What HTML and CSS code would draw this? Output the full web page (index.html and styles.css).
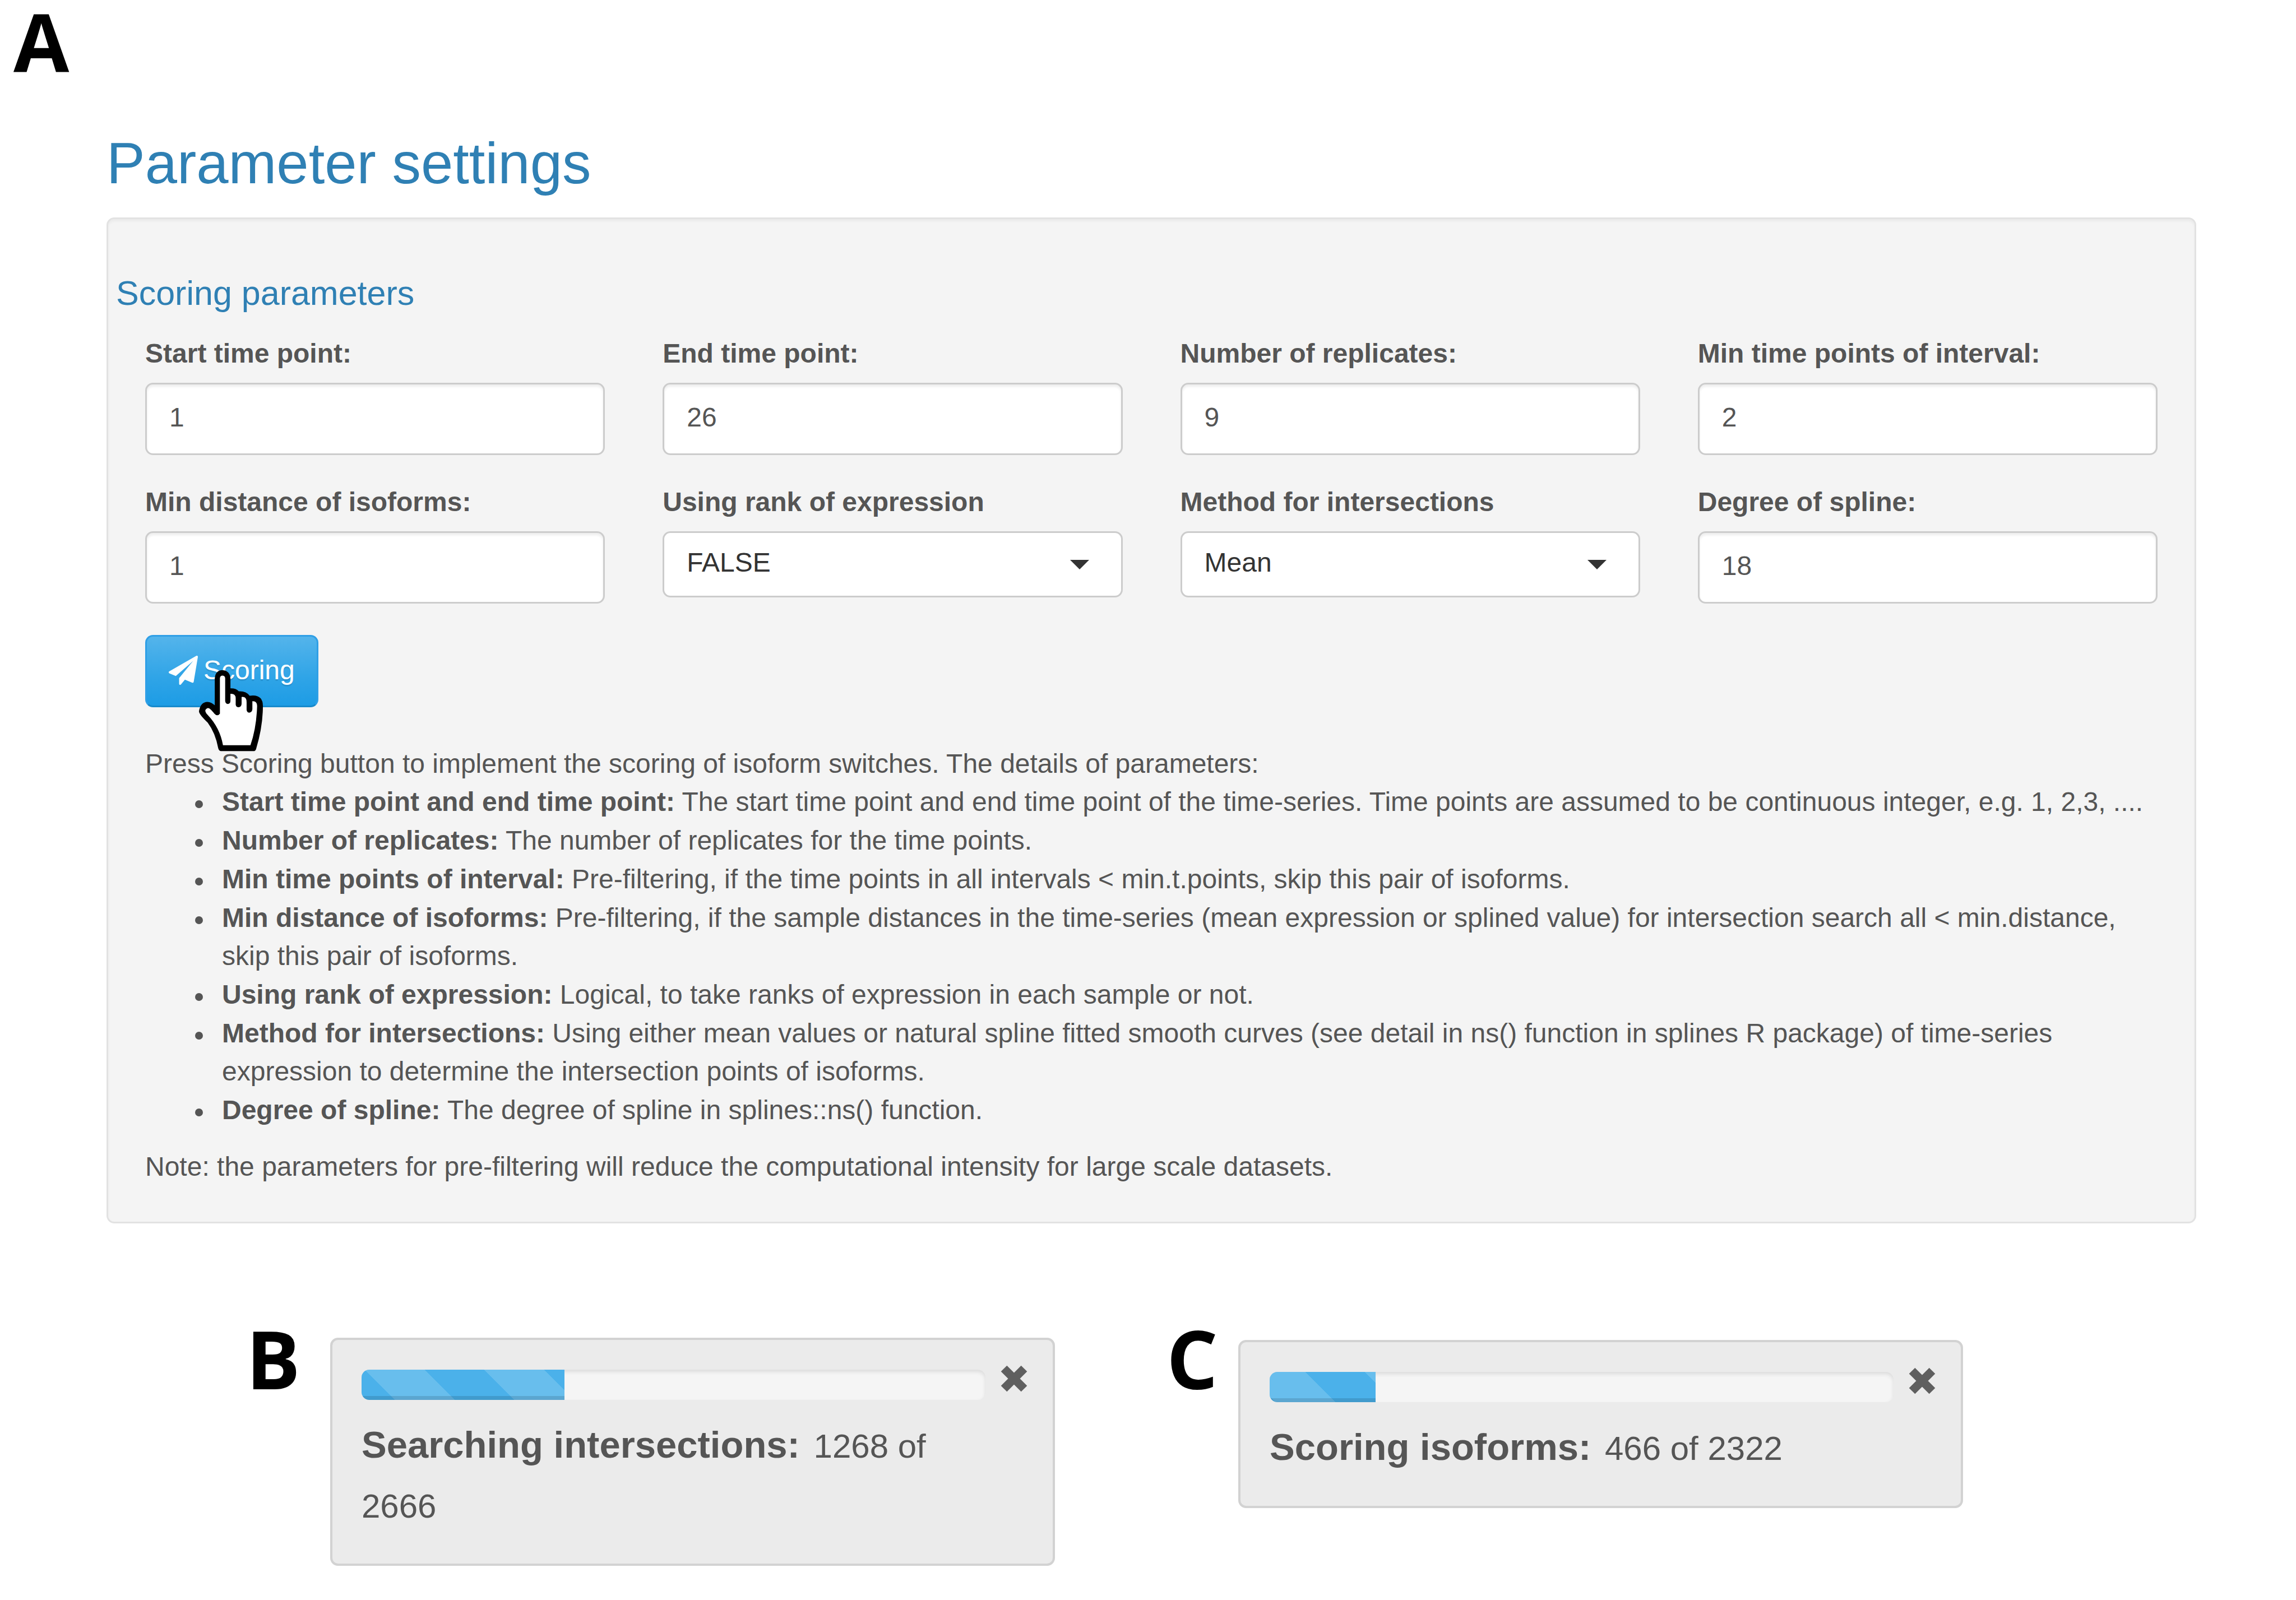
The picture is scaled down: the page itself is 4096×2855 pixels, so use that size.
FILE: index.html
```html
<!DOCTYPE html>
<html lang="en">
<head>
<meta charset="utf-8">
<title>Parameter settings</title>
<link rel="stylesheet" href="styles.css">
</head>
<body>
<main class="figure">
  <section class="figure-a">
    <h2 class="figure-letter">A</h2>
    <div class="page">
      <h1 class="page-title">Parameter settings</h1>
      <form class="well">
        <h3 class="well-title">Scoring parameters</h3>
        <div class="fields">
          <div class="field"><label for="start">Start time point:</label><input id="start" type="text" value="1"></div>
          <div class="field"><label for="end">End time point:</label><input id="end" type="text" value="26"></div>
          <div class="field"><label for="reps">Number of replicates:</label><input id="reps" type="text" value="9"></div>
          <div class="field"><label for="mint">Min time points of interval:</label><input id="mint" type="text" value="2"></div>
          <div class="field"><label for="mind">Min distance of isoforms:</label><input id="mind" type="text" value="1"></div>
          <div class="field"><label for="rank">Using rank of expression</label>
            <div class="select"><select id="rank"><option>FALSE</option><option>TRUE</option></select><svg class="caret" viewBox="0 0 34 17"><path d="M0 0H34L17 17Z"/></svg></div></div>
          <div class="field"><label for="method">Method for intersections</label>
            <div class="select"><select id="method"><option>Mean</option><option>Spline</option></select><svg class="caret" viewBox="0 0 34 17"><path d="M0 0H34L17 17Z"/></svg></div></div>
          <div class="field"><label for="degree">Degree of spline:</label><input id="degree" type="text" value="18"></div>
        </div>
        <div class="actions">
          <button class="btn" type="button"><svg class="plane" viewBox="0 0 1792 1792"><path d="M1764 11q33 24 27 64l-256 1536q-5 29-32 45-14 8-31 8-11 0-24-5l-453-185-242 295q-18 23-49 23-13 0-22-4-19-7-30.500-23.500t-11.500-36.500v-349l864-1059-1069 925-395-162q-37-14-40-55-2-40 32-59l1664-960q15-9 32-9 20 0 36 11z"/></svg>Scoring</button>
          <svg class="pointer" viewBox="42 50 498 632">
            <path class="pointer-edge" d="M165 325V115Q170 50 226 50Q283 55 287 115V192Q330 190 352 215Q410 212 437 250Q540 236 540 330Q540 490 487 665Q482 682 465 682H212Q197 680 192 660Q170 540 110 460Q42 395 42 372Q52 300 108 298Q140 300 165 325Z"/>
            <path class="pointer-fill" d="M205 112Q208 93 226 93Q246 95 246 115V290Q248 315 268 315Q287 312 287 290V235Q328 232 328 270V320Q332 340 352 340Q374 335 374 310V260Q413 255 413 300V360Q417 382 434 382Q456 378 458 355V293Q495 290 495 330Q490 500 443 636H229Q205 500 110 400Q88 378 92 362Q104 340 122 348Q140 360 162 390Q185 415 205 390Z"/>
          </svg>
        </div>
        <p class="text">Press Scoring button to implement the scoring of isoform switches. The details of parameters:</p>
        <ul class="text details">
          <li><b>Start time point and end time point:</b> The start time point and end time point of the time-series. Time points are assumed to be continuous integer, e.g. 1, 2,3, ....</li>
          <li><b>Number of replicates:</b> The number of replicates for the time points.</li>
          <li><b>Min time points of interval:</b> Pre-filtering, if the time points in all intervals &lt; min.t.points, skip this pair of isoforms.</li>
          <li><b>Min distance of isoforms:</b> Pre-filtering, if the sample distances in the time-series (mean expression or splined value) for intersection search all &lt; min.distance, skip this pair of isoforms.</li>
          <li><b>Using rank of expression:</b> Logical, to take ranks of expression in each sample or not.</li>
          <li><b>Method for intersections:</b> Using either mean values or natural spline fitted smooth curves (see detail in ns() function in splines R package) of time-series expression to determine the intersection points of isoforms.</li>
          <li><b>Degree of spline:</b> The degree of spline in splines::ns() function.</li>
        </ul>
        <p class="text">Note: the parameters for pre-filtering will reduce the computational intensity for large scale datasets.</p>
      </form>
    </div>
  </section>
  <div class="notices">
    <section class="notice-group notice-group-b">
      <h2 class="figure-letter">B</h2>
      <div class="notice">
        <div class="notice-head">
          <div class="progress" role="progressbar" aria-label="Searching intersections"><div class="bar" style="width:32.5%"></div></div>
          <button class="close" type="button" aria-label="Close"><svg viewBox="0 0 46 46"><path d="M5 5L41 41M41 5L5 41"/></svg></button>
        </div>
        <p class="message"><b>Searching intersections:</b> 1268 of 2666</p>
      </div>
    </section>
    <section class="notice-group notice-group-c">
      <h2 class="figure-letter">C</h2>
      <div class="notice">
        <div class="notice-head">
          <div class="progress" role="progressbar" aria-label="Scoring isoforms"><div class="bar bar-score" style="width:17%"></div></div>
          <button class="close" type="button" aria-label="Close"><svg viewBox="0 0 46 46"><path d="M5 5L41 41M41 5L5 41"/></svg></button>
        </div>
        <p class="message"><b>Scoring isoforms:</b> 466 of 2322</p>
      </div>
    </section>
  </div>
</main>
</body>
</html>
```
FILE: styles.css
```css
* { box-sizing: border-box; }
body {
  margin: 0;
  background: #fff;
  color: #555;
  font: 48px/68px "Liberation Sans", Arial, sans-serif;
}
h1, h2, h3, p, ul { margin: 0; }

.figure-letter {
  color: #000;
  font: 700 144px/144px "Open Sans", "Noto Sans", sans-serif;
}
.figure-a > .figure-letter { padding-left: 24px; }
.page { padding: 92px 178px 0 190px; }
.page-title {
  color: #2f80b4;
  font-size: 103px;
  font-weight: 400;
  line-height: 112px;
}
.well {
  margin-top: 40px;
  padding: 94px 66px 64px;
  border: 3px solid #e2e2e2;
  border-radius: 14px;
  background: #f4f4f4;
  box-shadow: inset 0 4px 4px rgba(0, 0, 0, .04);
}
.well-title {
  margin-left: -52px;
  color: #2f80b4;
  font-size: 61px;
  font-weight: 400;
  line-height: 76px;
}
.fields {
  display: grid;
  grid-template-columns: repeat(4, 1fr);
  gap: 50px 103px;
  margin-top: 36px;
}
.field { display: flex; flex-direction: column; gap: 18px; }
.field label { font-weight: 700; }
.field input, .field select {
  width: 100%;
  height: 129px;
  padding: 0 40px 6px;
  border: 3px solid #ccc;
  border-radius: 14px;
  background: #fff;
  color: #555;
  font: inherit;
}
.field input { box-shadow: inset 0 4px 4px rgba(0, 0, 0, .07); }
.select { display: grid; align-items: center; }
.select > * { grid-area: 1 / 1; }
.field select {
  height: 118px;
  color: #333;
  appearance: none;
}
.caret {
  justify-self: end;
  width: 34px;
  height: 17px;
  margin-right: 60px;
  fill: #333;
}
.actions { position: relative; margin-top: 56px; }
.btn {
  display: flex;
  align-items: center;
  gap: 10px;
  height: 129px;
  padding: 0 39px 3px;
  border: 3px solid #2f9fe6;
  border-bottom-color: #178acc;
  border-radius: 14px;
  background: linear-gradient(#54b4eb, #2fa4e7 60%, #1d9ce5);
  color: #fff;
  font: inherit;
  text-shadow: 0 3px 0 rgba(0, 0, 0, .1);
}
.plane { width: 52px; height: 52px; fill: #fff; }
.pointer {
  position: absolute;
  top: 62px;
  left: 96px;
  width: 114px;
  height: 146px;
}
.pointer-edge { fill: #000; }
.pointer-fill { fill: #fff; }
.actions + .text { margin-top: 67px; }
.details {
  display: grid;
  gap: 1px;
  margin-bottom: 33px;
  padding-left: 137px;
  list-style: none;
}
.details li::before {
  content: "";
  display: inline-block;
  width: 14px;
  height: 14px;
  margin: 0 34px 0 -48px;
  border-radius: 50%;
  background: #555;
  vertical-align: 5px;
}

.notices {
  display: grid;
  grid-template-columns: 1443fr 1421fr;
  gap: 199px;
  align-items: start;
  padding: 204px 594px 60px 439px;
}
.notice-group { display: grid; align-items: start; }
.notice-group-b { grid-template-columns: 150px 1fr; }
.notice-group-c { grid-template-columns: 128px 1fr; }
.notice-group .figure-letter { margin-top: -36px; }
.notice {
  padding: 46px 46px 49px 52px;
  border: 4px solid #d2d2d2;
  border-radius: 14px;
  background: #ebebeb;
}
.notice-group-c .notice { margin-top: 4px; }
.notice-head { display: flex; gap: 28px; }
.progress {
  flex: 1;
  height: 54px;
  margin-top: 7px;
  overflow: hidden;
  border-radius: 14px;
  background: #f5f5f5;
  box-shadow: inset 0 4px 7px rgba(0, 0, 0, .1);
}
.bar {
  height: 100%;
  background: #4bb1ea linear-gradient(45deg, rgba(255, 255, 255, .16) 25%, transparent 25% 50%, rgba(255, 255, 255, .16) 50% 75%, transparent 75%) 6px 0 / 213px 213px;
  box-shadow: inset 0 -7px 0 rgba(0, 0, 0, .12);
}
.bar-score { background-position-x: -43px; }
.close {
  width: 46px;
  height: 46px;
  padding: 0;
  border: 0;
  background: none;
}
.close svg { display: block; overflow: visible; stroke: #5f5f5f; stroke-width: 15px; }
.message {
  margin-top: 26px;
  padding-right: 74px;
  font-size: 60px;
  line-height: 107px;
}
.message b { margin-right: 8px; font-size: 67px; }
```
